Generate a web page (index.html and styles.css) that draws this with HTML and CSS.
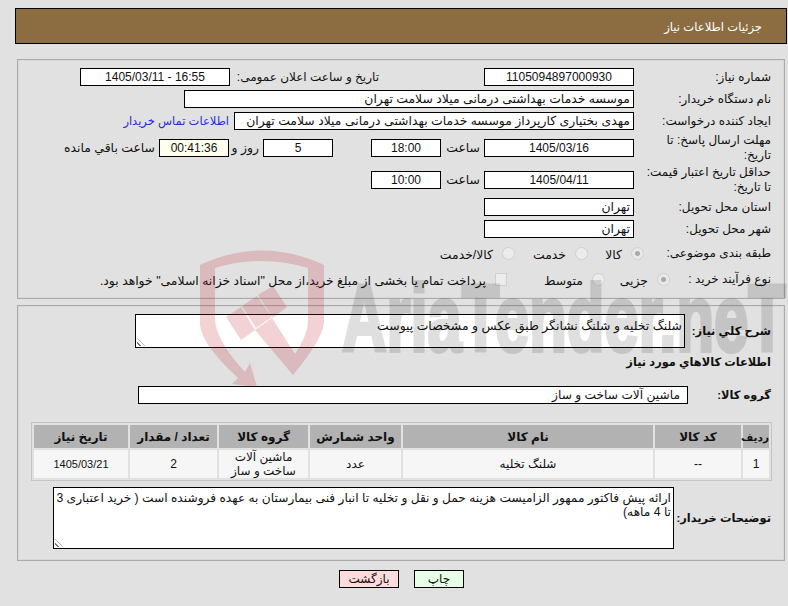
FILE: index.html
```html
<!DOCTYPE html>
<html lang="fa" dir="rtl">

<head>
    <meta charset="UTF-8">
    <title>جزئیات اطلاعات نیاز</title>
    <link rel="stylesheet" href="styles.css">
</head>

<body>
    <div class="page-title">جزئیات اطلاعات نیاز</div>

    <div class="panel panel-top">
        <div class="row row-1">
            <span class="label">شماره نیاز:</span>
            <span class="field w150 center">1105094897000930</span>
            <span class="label-public">تاریخ و ساعت اعلان عمومی:</span>
            <span class="field w150 center" dir="ltr">1405/03/11 - 16:55</span>
        </div>
        <div class="row row-2">
            <span class="label">نام دستگاه خریدار:</span>
            <span class="field w450">موسسه خدمات بهداشتی درمانی میلاد سلامت تهران</span>
        </div>
        <div class="row row-3">
            <span class="label">ایجاد کننده درخواست:</span>
            <span class="field w400">مهدی بختیاری کارپرداز موسسه خدمات بهداشتی درمانی میلاد سلامت تهران</span>
            <a class="contact" href="#">اطلاعات تماس خریدار</a>
        </div>
        <div class="row row-4">
            <span class="label">مهلت ارسال پاسخ: تا تاریخ:</span>
            <span class="field w150 center">1405/03/16</span>
            <span class="unit hour">ساعت</span>
            <span class="field w70 center">18:00</span>
            <span class="field w70 center day-box">5</span>
            <span class="unit day">روز و</span>
            <span class="field w70 center timer">00:41:36</span>
            <span class="unit remain">ساعت باقي مانده</span>
        </div>
        <div class="row row-5">
            <span class="label">حداقل تاریخ اعتبار قیمت: تا تاریخ:</span>
            <span class="field w150 center">1405/04/11</span>
            <span class="unit hour">ساعت</span>
            <span class="field w70 center">10:00</span>
        </div>
        <div class="row row-6">
            <span class="label">استان محل تحویل:</span>
            <span class="field w150">تهران</span>
        </div>
        <div class="row row-7">
            <span class="label">شهر محل تحویل:</span>
            <span class="field w150">تهران</span>
        </div>
        <div class="row row-8">
            <span class="label">طبقه بندی موضوعی:</span>
            <span class="radio checked"></span><span class="opt opt-kala">کالا</span>
            <span class="radio"></span><span class="opt opt-khedmat">خدمت</span>
            <span class="radio"></span><span class="opt">کالا/خدمت</span>
        </div>
        <div class="row row-9">
            <span class="label">نوع فرآیند خرید :</span>
            <span class="radio checked"></span><span class="opt opt-jozi">جزیی</span>
            <span class="radio"></span><span class="opt opt-motavaset">متوسط</span>
            <span class="check"></span>
            <span class="opt">پرداخت تمام یا بخشی از مبلغ خرید،از محل "اسناد خزانه اسلامی" خواهد بود.</span>
        </div>
    </div>

    <div class="panel panel-bottom">
        <div class="row row-desc">
            <span class="label strong">شرح کلي نياز:</span>
            <div class="area area-desc">شلنگ تخلیه و شلنگ نشانگر طبق عکس و مشخصات پیوست<span class="grip"></span></div>
        </div>
        <div class="section-title">اطلاعات کالاهاي مورد نياز</div>
        <div class="row row-group">
            <span class="label strong">گروه کالا:</span>
            <span class="field w550">ماشین آلات ساخت و ساز</span>
        </div>
        <table class="goods">
            <thead>
                <tr>
                    <th class="c-num">ردیف</th>
                    <th class="c-code">کد کالا</th>
                    <th class="c-name">نام کالا</th>
                    <th class="c-unit">واحد شمارش</th>
                    <th class="c-group">گروه کالا</th>
                    <th class="c-qty">تعداد / مقدار</th>
                    <th class="c-date">تاریخ نیاز</th>
                </tr>
            </thead>
            <tbody>
                <tr>
                    <td>1</td>
                    <td>--</td>
                    <td>شلنگ تخلیه</td>
                    <td>عدد</td>
                    <td>ماشین آلات ساخت و ساز</td>
                    <td>2</td>
                    <td class="td-date">1405/03/21</td>
                </tr>
            </tbody>
        </table>
        <div class="row row-note">
            <span class="label strong">توضیحات خریدار:</span>
            <div class="area area-note">ارائه پیش فاکتور ممهور الزامیست هزینه حمل و نقل و تخلیه تا انبار فنی بیمارستان به عهده فروشنده است ( خرید اعتباری 3 تا 4 ماهه)<span class="grip"></span></div>
        </div>
    </div>

    <div class="buttons">
        <button class="btn btn-print">چاپ</button>
        <button class="btn btn-back">بازگشت</button>
    </div>

    <!-- watermark sits over the form, semi transparent -->
    <svg class="watermark" width="788" height="606" viewBox="0 0 788 606">
        <path class="wm-red" d="M200 265 Q262 236 324 265 L324 323 Q322 340 293 375 L255 330 L272 318 L295 354 Q308 335 308 320 L308 268 Q262 254 215 268 L215 320 Q217 342 245 372 L250 363 L257 387 L232 384 L238 378 Q202 345 200 325 Z"/>
        <path class="wm-red" d="M226 317 L241 307 L255 330 L241 340 Z"/>
        <path class="wm-red" d="M242 306 L257 296 L272 317 L256 328 Z"/>
        <path class="wm-red" d="M258 295 L273 286 L287 307 L273 318 Z"/>
        <text class="wm-text" x="342" y="351" textLength="444" lengthAdjust="spacingAndGlyphs">AriaTender.neT</text>
    </svg>
</body>

</html>
```
FILE: styles.css
```css
body {
    margin: 0;
    width: 788px;
    height: 606px;
    position: relative;
    overflow: hidden;
    background-color: #e1e1e1;
    color: #111;
    font-family: "Liberation Sans", "DejaVu Sans", sans-serif;
    font-size: 12.4px;
    line-height: 16px;
}

.page-title {
    margin: 8px 1px 0 15px;
    height: 36px;
    padding-right: 24px;
    line-height: 36px;
    box-sizing: border-box;
    background-color: #8c6d42;
    border: 1px solid #000;
    color: #fff;
    font-size: 11.6px;
}

.panel {
    margin: 0 3px 0 17px;
    border: 1px solid #aaa;
    box-shadow: inset 0 0 0 1px #d8d8d8;
    box-sizing: border-box;
    padding: 8px 13px 0 0;
}

.panel-top {
    margin-top: 15px;
    height: 240px;
}

.panel-bottom {
    margin-top: 6px;
    height: 256px;
}

.row {
    display: flex;
    align-items: center;
    height: 18px;
    margin-bottom: 4px;
}

.label {
    width: 137px;
    padding-left: 12px;
    box-sizing: border-box;
    flex-shrink: 0;
    font-size: 12px;
}

.strong,
.section-title {
    font-size: 11.4px;
    font-weight: bold;
    white-space: nowrap;
}

.field {
    height: 18px;
    box-sizing: border-box;
    padding: 0 3px;
    border: 1px solid #000;
    background-color: #fff;
    line-height: 17px;
    white-space: nowrap;
    overflow: hidden;
    flex-shrink: 0;
}

.center {
    text-align: center;
    font-size: 12px;
}

.w70 {
    width: 70px;
}

.w150 {
    width: 150px;
}

.w400 {
    width: 400px;
}

.w450 {
    width: 450px;
}

.w550 {
    width: 550px;
}

.label-public {
    width: 254px;
    padding-right: 105px;
    box-sizing: border-box;
    white-space: nowrap;
    font-size: 12px;
}

.contact {
    margin-right: 5px;
    color: #2a2ae0;
    text-decoration: none;
    white-space: nowrap;
    font-size: 11.5px;
}

.timer {
    background-color: #ffffee;
}

.unit {
    white-space: nowrap;
}

.hour {
    width: 43px;
    padding-right: 4px;
    box-sizing: border-box;
}

.day-box {
    margin-right: 38px;
}

.day {
    width: 34px;
    padding-right: 4px;
    box-sizing: border-box;
}

.remain {
    padding-right: 4px;
}

.row-3 {
    margin-bottom: 9px;
}

.row-4 {
    margin-bottom: 14px;
}

.row-5 {
    margin-bottom: 9px;
}

.row-4 .label,
.row-5 .label {
    line-height: 15px;
}

.row-7 {
    margin-bottom: 6px;
}

.row-8 {
    margin-bottom: 8px;
}

.radio {
    width: 13px;
    height: 13px;
    box-sizing: border-box;
    border: 1px solid #cfcfcf;
    border-radius: 50%;
    background-color: #ececec;
    flex-shrink: 0;
}

.radio.checked {
    border: 4px solid #e8e8e8;
    outline: 1px solid #cfcfcf;
    outline-offset: -1px;
    background-color: #aaa;
}

.check {
    width: 12px;
    height: 13px;
    box-sizing: border-box;
    border: 1px solid #cfcfcf;
    background-color: #ececec;
    flex-shrink: 0;
}

.opt {
    margin-right: 9px;
    padding-top: 3px;
    white-space: nowrap;
}

.row-8 .label {
    width: 127px;
    padding-left: 0;
}

.opt-kala {
    width: 16px;
    margin-left: 18px;
}

.opt-khedmat {
    width: 32px;
    margin-left: 19px;
}

.row-9 .label {
    width: 101px;
    padding-left: 0;
}

.opt-jozi {
    width: 28px;
    margin-left: 15px;
}

.opt-motavaset {
    width: 36px;
    margin-left: 40px;
}

.row-desc {
    height: 34px;
    margin-bottom: 6px;
}

.row-desc .label {
    width: 86px;
    padding-left: 0;
}

.area {
    position: relative;
    box-sizing: border-box;
    border: 1px solid #000;
    background-color: #fff;
    padding: 3px 2px;
}

.area-desc {
    width: 550px;
    height: 34px;
}

.section-title {
    height: 16px;
}

.row-group {
    margin-top: 16px;
    margin-bottom: 18px;
}

.row-group .label {
    width: 83px;
    padding-left: 0;
}

.row-group .field {
    padding-right: 7px;
    font-size: 12.2px;
}

.grip {
    position: absolute;
    left: 1px;
    bottom: 1px;
    width: 8px;
    height: 8px;
    background: repeating-linear-gradient(45deg, transparent 0, transparent 2px, #777 2px, #777 3px);
    clip-path: polygon(0 0, 100% 100%, 0 100%);
}

.goods {
    width: 741px;
    margin-right: -1px;
    table-layout: fixed;
    border-collapse: separate;
    border-spacing: 2px;
    border: 1px solid #c4c4c4;
    box-sizing: border-box;
    font-size: 12px;
}

.goods th {
    height: 23px;
    padding: 0;
    background-color: #b2b2b2;
    font-weight: bold;
}

.goods td {
    height: 28px;
    padding: 0 8px;
    box-sizing: border-box;
    background-color: #f6f6f6;
    text-align: center;
    line-height: 14px;
}

.goods .td-date {
    font-size: 11px;
}

.goods .c-num {
    width: 26px;
    font-size: 10.5px;
}

.c-code {
    width: 86px;
}

.c-name {
    width: 250px;
}

.c-unit {
    width: 91px;
}

.c-group {
    width: 89px;
}

.c-qty {
    width: 87px;
}

.c-date {
    width: 94px;
}

.row-note {
    height: 62px;
    margin-top: 6px;
}

.row-note .label {
    width: 97px;
    padding-left: 0;
}

.area-note {
    width: 621px;
    height: 62px;
    line-height: 14px;
    font-size: 12.2px;
}

.buttons {
    display: flex;
    gap: 15px;
    margin-top: 9px;
    padding-right: 324px;
}

.btn {
    height: 18px;
    padding: 0;
    border: 1px solid #000;
    font-family: inherit;
    font-size: 12px;
    color: #111;
}

.btn-print {
    width: 50px;
    background-color: #e6ffe6;
}

.btn-back {
    width: 60px;
    background-color: #ffdcdc;
}

.watermark {
    position: absolute;
    left: 0;
    top: 0;
    pointer-events: none;
}

.wm-red {
    fill: rgba(190, 30, 40, 0.2);
}

.wm-text {
    direction: ltr;
    fill: #000;
    stroke: #000;
    stroke-width: 4px;
    opacity: 0.12;
    font-family: "Liberation Sans Narrow", "Liberation Sans", sans-serif;
    font-weight: bold;
    font-size: 94px;
}
```
